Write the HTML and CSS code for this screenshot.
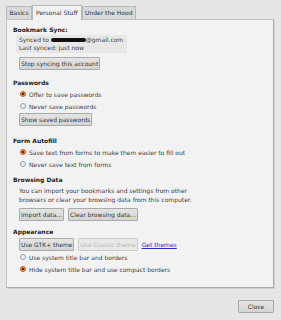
FILE: index.html
```html
<!DOCTYPE html>
<html lang="en">
<head>
    <meta charset="UTF-8">
    <title>Options</title>
    <link rel="stylesheet" href="styles.css">
</head>
<body>
    <div class="window">
        <div class="tabs">
            <div class="tab">Basics</div>
            <div class="tab active">Personal Stuff</div>
            <div class="tab">Under the Hood</div>
        </div>

        <div class="panel">
            <div class="section">
                <h3>Bookmark Sync:</h3>
                <div class="sync-info">
                    <p>Synced to <span class="redacted"></span>@gmail.com</p>
                    <p>Last synced: just now</p>
                </div>
                <div class="row">
                    <button>Stop syncing this account</button>
                </div>
            </div>

            <div class="section">
                <h3>Passwords</h3>
                <label class="radio"><span class="dot on"></span>Offer to save passwords</label>
                <label class="radio"><span class="dot"></span>Never save passwords</label>
                <div class="row tight">
                    <button>Show saved passwords</button>
                </div>
            </div>

            <div class="section autofill">
                <h3>Form Autofill</h3>
                <label class="radio"><span class="dot on"></span>Save text from forms to make them easier to fill out</label>
                <label class="radio"><span class="dot"></span>Never save text from forms</label>
            </div>

            <div class="section after-radios">
                <h3>Browsing Data</h3>
                <p class="note">You can import your bookmarks and settings from other browsers or clear your browsing data from this computer.</p>
                <div class="row">
                    <button>Import data...</button>
                    <button>Clear browsing data...</button>
                </div>
            </div>

            <div class="section appearance">
                <h3>Appearance</h3>
                <div class="row tight">
                    <button>Use GTK+ theme</button>
                    <button disabled>Use Classic theme</button>
                    <a href="#">Get themes</a>
                </div>
                <label class="radio"><span class="dot"></span>Use system title bar and borders</label>
                <label class="radio"><span class="dot on"></span>Hide system title bar and use compact borders</label>
            </div>
        </div>

        <div class="footer">
            <button class="close">Close</button>
        </div>
    </div>
</body>
</html>
```

FILE: styles.css
```css
* {
    margin: 0;
    padding: 0;
    box-sizing: border-box;
}

body {
    font-family: 'DejaVu Sans', sans-serif;
    font-size: 6px;
    color: #3c3c3c;
    background-color: #e6e6e6;
    width: 281px;
    height: 320px;
    overflow: hidden;
}

.window {
    padding: 5px 7px 0 6px;
}

.tabs {
    display: flex;
    align-items: flex-end;
    height: 14px;
}

.tab {
    height: 13px;
    line-height: 12px;
    padding: 0 2.5px;
    background: #d9d9d9;
    border: 1px solid #b8b8b8;
    border-bottom: none;
    color: #333;
}

.tab.active {
    height: 15px;
    line-height: 13px;
    background: #f2f2f2;
    position: relative;
    z-index: 1;
    margin-bottom: -1px;
    padding: 0 3px;
}

.panel {
    background: #f2f2f2;
    border: 1px solid #c4c4c4;
    border-right-color: #ababab;
    border-bottom-color: #ababab;
    height: 269px;
    padding: 4px 6px 0 6px;
    box-shadow: 1px 1px 0 #d2d2d2;
}

.section {
    margin-top: 7px;
}

.section:first-child {
    margin-top: 0;
}

.section.autofill {
    margin-top: 9px;
}

.section.after-radios {
    margin-top: 4px;
}

.section.appearance {
    margin-top: 5px;
}

h3 {
    font-size: 6px;
    font-weight: bold;
    color: #222;
    line-height: 11px;
}

.sync-info {
    background: #e7e7e7;
    margin-left: 3px;
    width: 111px;
    padding: 1px 3px;
    line-height: 8px;
    white-space: nowrap;
}

.redacted {
    display: inline-block;
    width: 35px;
    height: 4px;
    background: #111;
    border-radius: 3px;
    vertical-align: middle;
}

.row {
    display: flex;
    align-items: center;
    gap: 4px;
    margin: 4px 0 0 6px;
}

.row.tight {
    margin-top: 1px;
}

button {
    font-family: inherit;
    font-size: 6px;
    color: #333;
    height: 13px;
    padding: 0 1px;
    background: linear-gradient(#e4e4e4, #d5d5d5);
    border: 1px solid #aaaaaa;
    border-radius: 1px;
}

button:disabled {
    color: #b8b8b8;
    background: #e8e8e8;
    border-color: #cccccc;
}

a {
    color: #2a2acc;
}

.radio {
    display: flex;
    align-items: center;
    height: 12px;
    margin-left: 7px;
}

.dot {
    width: 6px;
    height: 6px;
    border-radius: 50%;
    border: 1px solid #a0a0a0;
    background: #ececec;
    margin-right: 3px;
}

.dot.on {
    border-color: #c4561f;
    background: radial-gradient(circle, #5a220c 0 1px, #ee8a3a 1.5px);
}

.note {
    margin: 1px 0 0 6px;
    line-height: 9px;
    width: 180px;
}

.footer {
    display: flex;
    justify-content: flex-end;
    padding: 12px 0 0 0;
}

.close {
    width: 36px;
    height: 13px;
}
```
